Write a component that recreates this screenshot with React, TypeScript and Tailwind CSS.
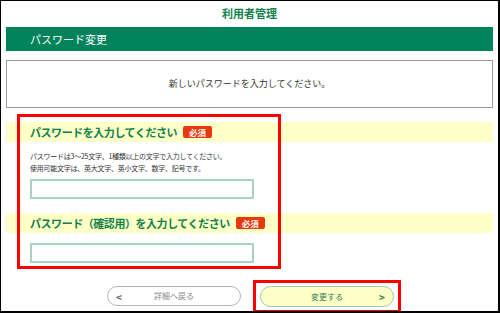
import React from "react";

const jp = { fontFamily: '"Noto Sans CJK JP", "Noto Sans", sans-serif' };

function Badge() {
  return (
    <span className="ml-[6px] inline-flex h-[12px] w-[29px] items-center justify-center rounded-[2px] bg-[#e8380d] text-[8.5px] font-bold leading-none text-white">
      必須
    </span>
  );
}

function SectionHead({ title }: { title: string }) {
  return (
    <div className="flex h-[20px] items-center rounded-[2px] bg-[#ffffc8] pl-[24px]">
      <span className="text-[11px] font-bold leading-none tracking-[-0.45px] text-[#0f7f4c]">{title}</span>
      <Badge />
    </div>
  );
}

export default function App() {
  return (
    <div
      className="relative box-border h-[313px] w-[500px] overflow-hidden border-b-2 border-l border-r-2 border-t border-black bg-white"
      style={jp}
    >
      <div className="flex h-[26px] justify-center pt-[5px] text-[11px] font-bold leading-[14px] text-[#0f7f4c]">
        利用者管理
      </div>
      <div className="mx-[5px] flex h-[24px] items-center bg-[#00835a] pl-[24px] text-[11px] leading-none text-white">
        パスワード変更
      </div>
      <div className="mx-[5px] mt-[9px] flex h-[48px] items-center justify-center border border-[#9a9a9a] text-[9px] text-[#333]">
        新しいパスワードを入力してください。
      </div>

      <div className="mx-[5px] mt-[14px]">
        <SectionHead title="パスワードを入力してください" />
        <div className="mt-[8px] pl-[24px] text-[7px] leading-[12px] tracking-[-0.25px] text-[#333]">
          <div>パスワードは3～25文字、1種類以上の文字で入力してください。</div>
          <div>使用可能文字は、英大文字、英小文字、数字、記号です。</div>
        </div>
        <div className="ml-[24px] mt-[5px] h-[20px] w-[224px] border-2 border-[#a9d2c4] bg-white" />
      </div>

      <div className="mx-[5px] mt-[14px]">
        <SectionHead title="パスワード（確認用）を入力してください" />
        <div className="ml-[24px] mt-[10px] h-[20px] w-[224px] border-2 border-[#a9d2c4] bg-white" />
      </div>

      <div className="mt-[17px] flex items-start pl-[106px]">
        <div className="mt-[6px] flex h-[20px] w-[134px] items-center rounded-full border-[1.5px] border-[#b4b4b4] bg-white px-[8px] text-[8px] text-[#8a8a8a]">
          <span className="text-[10px] font-bold text-[#666]">&lt;</span>
          <span className="flex-1 text-center">詳細へ戻る</span>
          <span className="w-[6px]" />
        </div>
        <div className="ml-[12px] border-[3px] border-[#ff0000] px-[4px] pb-[3px] pt-[3px]">
          <div className="flex h-[21px] w-[134px] items-center rounded-full border-[1.5px] border-[#9fc8a8] bg-[#ffffc8] px-[8px] text-[8px] text-[#2f7f52]">
            <span className="w-[6px]" />
            <span className="flex-1 text-center">変更する</span>
            <span className="text-[10px] font-bold text-[#2f7f52]">&gt;</span>
          </div>
        </div>
      </div>

      <div className="pointer-events-none absolute left-[16px] top-[113px] h-[155px] w-[264px] border-[3px] border-[#ff0000]" />
    </div>
  );
}
